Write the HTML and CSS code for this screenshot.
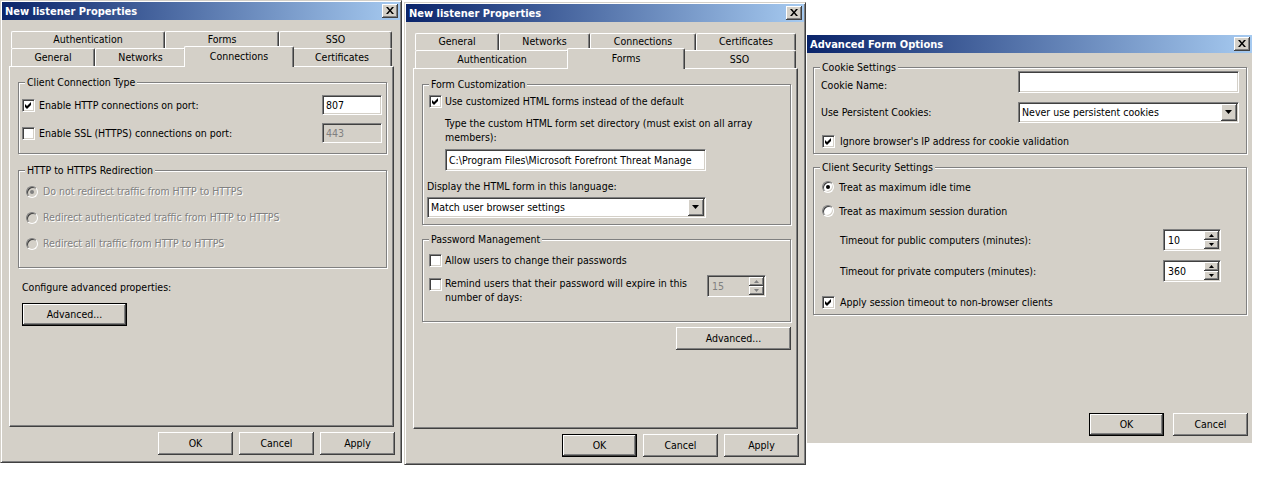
FILE: index.html
```html
<!DOCTYPE html>
<html lang="en">
<head>
<meta charset="utf-8">
<title>Listener Properties</title>
<link rel="stylesheet" href="styles.css">
</head>
<body>
<div class="desk">

  <section class="win w1">
    <header class="title"><span class="ttext">New listener Properties</span><span class="close"><svg width="8" height="7" viewBox="0 0 8 7"><path d="M0 0h2l2 2.5L6 0h2L5 3.5 8 7H6L4 4.5 2 7H0l3-3.5z"/></svg></span></header>
    <div class="body">
      <div class="tabs">
        <div class="tabrow back">
          <div class="tab tw-auth">Authentication</div>
          <div class="tab tw-forms">Forms</div>
          <div class="tab tw-sso">SSO</div>
        </div>
        <div class="tabrow front">
          <div class="tab tw-gen">General</div>
          <div class="tab tw-net">Networks</div>
          <div class="tab tw-conn-sel sel">Connections</div>
          <div class="tab tw-cert">Certificates</div>
        </div>
      </div>
      <div class="panel">
        <div class="group cc">
          <span class="legend">Client Connection Type</span>
          <div class="row h20">
            <span class="chk"><svg width="9" height="9" viewBox="0 0 9 9"><path d="M1 3l2 2 4-4v3L3 8 1 6z"/></svg></span>
            <span class="lbl">Enable HTTP connections on port:</span>
            <span class="edit port">807</span>
          </div>
          <div class="row h20 mt8">
            <span class="chk"></span>
            <span class="lbl">Enable SSL (HTTPS) connections on port:</span>
            <span class="edit port dis">443</span>
          </div>
        </div>
        <div class="group rd">
          <span class="legend">HTTP to HTTPS Redirection</span>
          <div class="row h13">
            <span class="radio dis on"></span><span class="lbl rl dis">Do not redirect traffic from HTTP to HTTPS</span>
          </div>
          <div class="row h13 mt13">
            <span class="radio dis"></span><span class="lbl rl dis">Redirect authenticated traffic from HTTP to HTTPS</span>
          </div>
          <div class="row h13 mt13">
            <span class="radio dis"></span><span class="lbl rl dis">Redirect all traffic from HTTP to HTTPS</span>
          </div>
        </div>
        <div class="cfg">Configure advanced properties:</div>
        <button class="btn def adv1">Advanced...</button>
      </div>
      <div class="btnrow">
        <button class="btn">OK</button>
        <button class="btn">Cancel</button>
        <button class="btn">Apply</button>
      </div>
    </div>
  </section>

  <section class="win w2">
    <header class="title"><span class="ttext">New listener Properties</span><span class="close"><svg width="8" height="7" viewBox="0 0 8 7"><path d="M0 0h2l2 2.5L6 0h2L5 3.5 8 7H6L4 4.5 2 7H0l3-3.5z"/></svg></span></header>
    <div class="body">
      <div class="tabs">
        <div class="tabrow back">
          <div class="tab tw-gen">General</div>
          <div class="tab tw-net">Networks</div>
          <div class="tab tw-conn">Connections</div>
          <div class="tab tw-cert">Certificates</div>
        </div>
        <div class="tabrow front">
          <div class="tab tw-auth">Authentication</div>
          <div class="tab tw-forms-sel sel">Forms</div>
          <div class="tab tw-sso">SSO</div>
        </div>
      </div>
      <div class="panel">
        <div class="group fc">
          <span class="legend">Form Customization</span>
          <div class="row h14">
            <span class="chk"><svg width="9" height="9" viewBox="0 0 9 9"><path d="M1 3l2 2 4-4v3L3 8 1 6z"/></svg></span>
            <span class="lbl">Use customized HTML forms instead of the default</span>
          </div>
          <div class="desc">Type the custom HTML form set directory (must exist on all array<br>members):</div>
          <span class="edit path">C:\Program Files\Microsoft Forefront Threat Manage</span>
          <div class="desc2">Display the HTML form in this language:</div>
          <div class="combo lang">
            <span class="val">Match user browser settings</span>
            <span class="arrow"><svg width="7" height="4" viewBox="0 0 7 4"><path d="M0 0h7L3.5 4z"/></svg></span>
          </div>
        </div>
        <div class="group pm">
          <span class="legend">Password Management</span>
          <div class="row h14">
            <span class="chk"></span>
            <span class="lbl">Allow users to change their passwords</span>
          </div>
          <div class="row top">
            <span class="chk"></span>
            <span class="lbl two">Remind users that their password will expire in this<br>number of days:</span>
            <div class="spin dis sp15">
              <span class="val">15</span>
              <span class="sbtns">
                <span class="sb"><svg width="5" height="3" viewBox="0 0 5 3"><path d="M2.5 0L5 3H0z"/></svg></span>
                <span class="sb"><svg width="5" height="3" viewBox="0 0 5 3"><path d="M0 0h5L2.5 3z"/></svg></span>
              </span>
            </div>
          </div>
        </div>
        <button class="btn adv2">Advanced...</button>
      </div>
      <div class="btnrow">
        <button class="btn def">OK</button>
        <button class="btn">Cancel</button>
        <button class="btn">Apply</button>
      </div>
    </div>
  </section>

  <section class="win w3">
    <header class="title"><span class="ttext">Advanced Form Options</span><span class="close"><svg width="8" height="7" viewBox="0 0 8 7"><path d="M0 0h2l2 2.5L6 0h2L5 3.5 8 7H6L4 4.5 2 7H0l3-3.5z"/></svg></span></header>
    <div class="body">
      <div class="group ck">
        <span class="legend">Cookie Settings</span>
        <div class="row h22">
          <span class="plain lowlbl">Cookie Name:</span>
          <span class="edit cname"></span>
        </div>
        <div class="row h21 mt9">
          <span class="plain">Use Persistent Cookies:</span>
          <div class="combo persist">
            <span class="val">Never use persistent cookies</span>
            <span class="arrow"><svg width="7" height="4" viewBox="0 0 7 4"><path d="M0 0h7L3.5 4z"/></svg></span>
          </div>
        </div>
        <div class="row h14 mt11">
          <span class="chk ind"><svg width="9" height="9" viewBox="0 0 9 9"><path d="M1 3l2 2 4-4v3L3 8 1 6z"/></svg></span>
          <span class="lbl">Ignore browser's IP address for cookie validation</span>
        </div>
      </div>
      <div class="group cs">
        <span class="legend">Client Security Settings</span>
        <div class="row h14">
          <span class="radio on ind"></span><span class="lbl">Treat as maximum idle time</span>
        </div>
        <div class="row h14 mt10">
          <span class="radio ind"></span><span class="lbl">Treat as maximum session duration</span>
        </div>
        <div class="row h22 mt11">
          <span class="plain tlbl">Timeout for public computers (minutes):</span>
          <div class="spin tspin">
            <span class="val">10</span>
            <span class="sbtns">
              <span class="sb"><svg width="5" height="3" viewBox="0 0 5 3"><path d="M2.5 0L5 3H0z"/></svg></span>
              <span class="sb"><svg width="5" height="3" viewBox="0 0 5 3"><path d="M0 0h5L2.5 3z"/></svg></span>
            </span>
          </div>
        </div>
        <div class="row h22 mt9">
          <span class="plain tlbl">Timeout for private computers (minutes):</span>
          <div class="spin tspin">
            <span class="val">360</span>
            <span class="sbtns">
              <span class="sb"><svg width="5" height="3" viewBox="0 0 5 3"><path d="M2.5 0L5 3H0z"/></svg></span>
              <span class="sb"><svg width="5" height="3" viewBox="0 0 5 3"><path d="M0 0h5L2.5 3z"/></svg></span>
            </span>
          </div>
        </div>
        <div class="row h14 mt13">
          <span class="chk ind"><svg width="9" height="9" viewBox="0 0 9 9"><path d="M1 3l2 2 4-4v3L3 8 1 6z"/></svg></span>
          <span class="lbl">Apply session timeout to non-browser clients</span>
        </div>
      </div>
      <div class="btnrow">
        <button class="btn def">OK</button>
        <button class="btn">Cancel</button>
      </div>
    </div>
  </section>

</div>
</body>
</html>
```

FILE: styles.css
```css
* { box-sizing: border-box; }
html, body { margin: 0; padding: 0; background: #fff; }
body {
  font-family: "DejaVu Sans Condensed", "Liberation Sans", Arial, sans-serif;
  font-size: 10.5px;
  line-height: 13px;
  color: #000;
}
svg { display: block; fill: #000; }

.desk { display: flex; align-items: flex-start; }

/* window frame */
.win {
  flex: none;
  display: flex;
  flex-direction: column;
  background: #d4d0c8;
  border: 1px solid;
  border-color: #d4d0c8 #404040 #404040 #d4d0c8;
  box-shadow: inset 1px 1px 0 #fff, inset -1px -1px 0 #808080;
  padding: 1px;
}
.w1 { width: 402px; height: 463px; }
.w2 { width: 402px; height: 463px; margin: 2px 0 0 2px; }
.w3 { width: 445px; height: 408px; margin: 35px 0 0 1px; border: none; box-shadow: none; padding: 0; }

.title {
  flex: none;
  height: 18px;
  display: flex;
  align-items: center;
  justify-content: space-between;
  padding-left: 3px;
  background: linear-gradient(90deg, #0a246a, #a6caf0);
  color: #fff;
  font-weight: bold;
  font-size: 11px;
  white-space: nowrap;
}
.close {
  width: 16px;
  height: 14px;
  margin-right: 2px;
  background: #d4d0c8;
  box-shadow: inset -1px -1px 0 #404040, inset 1px 1px 0 #fff, inset -2px -2px 0 #808080;
  display: flex;
  align-items: center;
  justify-content: center;
}
.close svg { margin: -1px 0 0 -1px; }

.body {
  flex: 1;
  display: flex;
  flex-direction: column;
  padding: 11px 6px 0 7px;
}
.w3 .body { padding: 14px 5px 0 6px; }

/* tabs */
.tabs { flex: none; margin-left: 2px; width: 381px; }
.tabrow { display: flex; align-items: flex-start; }
.tabrow.back { height: 17px; }
.tabrow.front { height: 18px; }
.tab {
  flex: none;
  text-align: center;
  white-space: nowrap;
  background: #d4d0c8;
  border-top: 1px solid #fff;
  border-left: 1px solid #fff;
  border-right: 1px solid #404040;
  box-shadow: inset -1px 0 0 #808080;
  border-radius: 2px 2px 0 0;
}
.back .tab { height: 17px; line-height: 15px; }
.front .tab { height: 18px; line-height: 16px; }
.front .tab.sel {
  position: relative;
  z-index: 1;
  height: 21px;
  line-height: 18px;
  margin: -2px -2px 0;
}
.tw-auth { width: 154px; }
.tw-forms { width: 114px; }
.tw-forms-sel { width: 118px; }
.tw-sso { width: 113px; }
.tw-gen { width: 84px; }
.tw-net { width: 91px; }
.tw-conn { width: 106px; }
.tw-conn-sel { width: 110px; }
.tw-cert { width: 100px; }

.panel {
  flex: none;
  height: 361px;
  display: flex;
  flex-direction: column;
  align-items: flex-start;
  border: 1px solid;
  border-color: #fff #404040 #404040 #fff;
  box-shadow: inset -1px -1px 0 #808080;
  padding: 15px 6px 0 8px;
}

/* group boxes */
.group {
  position: relative;
  flex: none;
  display: flex;
  flex-direction: column;
  align-items: flex-start;
  border: 1px solid #808080;
  box-shadow: inset 1px 1px 0 #fff, 1px 1px 0 #fff;
}
.panel .group { width: 369px; }
.w3 .group { width: 434px; }
.legend {
  position: absolute;
  top: -7px;
  left: 6px;
  padding: 0 2px;
  background: #d4d0c8;
  line-height: 13px;
  white-space: nowrap;
}

.row { display: flex; align-items: center; flex: none; white-space: nowrap; align-self: stretch; }
.row.top { align-items: flex-start; }
.h13 { height: 13px; }
.h14 { height: 14px; }
.h20 { height: 20px; }
.h21 { height: 21px; }
.h22 { height: 22px; }
.mt8 { margin-top: 8px; }
.mt9 { margin-top: 9px; }
.mt10 { margin-top: 10px; }
.mt11 { margin-top: 11px; }
.mt13 { margin-top: 13px; }

/* controls */
.sunk, .chk, .edit, .combo, .spin {
  border: 1px solid;
  border-color: #808080 #fff #fff #808080;
  box-shadow: inset 1px 1px 0 #404040, inset -1px -1px 0 #d4d0c8;
}
.chk {
  flex: none;
  width: 13px;
  height: 13px;
  padding: 1px;
  background: #fff;
}
.radio {
  flex: none;
  position: relative;
  width: 12px;
  height: 12px;
  border-radius: 50%;
  border: 1px solid;
  border-color: #808080 #fff #fff #808080;
  box-shadow: inset 1px 1px 0 #404040, inset -1px -1px 0 #d4d0c8;
  background: #fff;
}
.radio.on::after {
  content: "";
  position: absolute;
  left: 3px;
  top: 3px;
  width: 4px;
  height: 4px;
  border-radius: 50%;
  background: #000;
}
.radio.dis { background: #d4d0c8; }
.radio.dis.on::after { background: #808080; }

.lbl { margin-left: 4px; }
.w2 .lbl { margin-left: 3px; }
.w3 .lbl { margin-left: 5px; }
.lbl.rl { margin-left: 5px; }
.dis { color: #808080; }
.lbl.dis { text-shadow: 1px 1px 0 #fff; }

.edit {
  flex: none;
  display: flex;
  align-items: center;
  background: #fff;
  padding: 0 2px 0 3px;
  white-space: nowrap;
  overflow: hidden;
}
.edit.dis { background: #d4d0c8; }

.combo {
  flex: none;
  display: flex;
  align-items: stretch;
  background: #fff;
  padding: 1px;
}
.combo .val {
  flex: 1;
  display: flex;
  align-items: center;
  padding-left: 2px;
  white-space: nowrap;
  overflow: hidden;
}
.arrow, .sb {
  flex: none;
  display: flex;
  align-items: center;
  justify-content: center;
  background: #d4d0c8;
  box-shadow: inset -1px -1px 0 #404040, inset 1px 1px 0 #fff, inset -2px -2px 0 #808080;
}
.arrow { width: 16px; }
.arrow svg { margin: -1px 0 0 -1px; }

.spin {
  flex: none;
  display: flex;
  align-items: stretch;
  background: #fff;
  padding: 1px;
}
.spin .val { flex: 1; display: flex; align-items: center; padding-left: 3px; }
.sbtns { flex: none; width: 15px; display: flex; flex-direction: column; }
.sb { flex: 1; }
.sb svg { margin: -1px 0 0 -1px; }
.spin.dis { background: #d4d0c8; }
.spin.dis svg { fill: #808080; }

/* buttons */
.btn {
  flex: none;
  width: 75px;
  height: 23px;
  margin: 0;
  padding: 0;
  font: inherit;
  color: #000;
  background: #d4d0c8;
  border: none;
  box-shadow: inset -1px -1px 0 #404040, inset 1px 1px 0 #fff, inset -2px -2px 0 #808080;
  display: flex;
  align-items: center;
  justify-content: center;
  white-space: nowrap;
}
.btn.def { border: 1px solid #000; }
.btnrow {
  flex: none;
  display: flex;
  justify-content: flex-end;
  gap: 6px;
  margin: 5px -1px 0 0;
}
.w3 .btnrow { gap: 9px; margin-top: 98px; }

/* dialog 1 specifics */
.group.cc { height: 72px; padding: 12px 0 0 3px; }
.port { width: 60px; height: 20px; margin-left: auto; margin-right: 4px; }
.group.rd { height: 98px; margin-top: 16px; padding: 14px 0 0 7px; }
.cfg { margin: 13px 0 0 4px; white-space: nowrap; }
.adv1 { width: 105px; margin: 9px 0 0 4px; }

/* dialog 2 specifics */
.group.fc { height: 141px; padding: 9px 0 0 6px; }
.desc { margin: 8px 0 0 16px; line-height: 14px; white-space: nowrap; }
.edit.path { width: 261px; height: 22px; margin: 5px 0 0 16px; }
.desc2 { margin: 8px 0 0 -2px; line-height: 14px; white-space: nowrap; }
.combo.lang { width: 279px; height: 21px; margin: 4px 0 0 -2px; }
.group.pm { height: 83px; margin-top: 14px; padding: 13px 0 0 6px; }
.row.top { margin-top: 8px; height: 28px; }
.row.top .chk { margin-top: 3px; }
.lbl.two { margin-top: 1px; line-height: 14px; }
.sp15 { width: 59px; height: 22px; margin-left: auto; margin-right: 24px; }
.adv2 { width: 115px; margin: 5px 0 0 auto; }

/* dialog 3 specifics */
.group.ck { height: 87px; padding: 3px 7px 0 7px; }
.row.h22 { align-items: center; }
.lowlbl { align-self: flex-start; margin-top: 8px; }
.edit.cname { width: 221px; height: 22px; margin-left: auto; }
.combo.persist { width: 221px; height: 21px; margin-left: auto; }
.ind { margin-left: 1px; }
.group.cs { height: 148px; margin-top: 13px; padding: 12px 7px 0 7px; }
.tlbl { margin-left: 19px; }
.tspin { width: 58px; height: 22px; margin-left: auto; margin-right: 18px; }
```
